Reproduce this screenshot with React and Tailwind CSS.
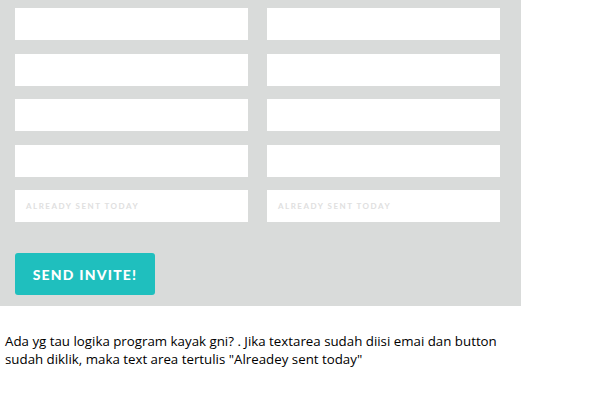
export default function App() {
  const rows = [0, 1, 2, 3];
  return (
    <div className="w-[608px] h-[404px] bg-white relative overflow-hidden">
      <div className="w-[521px] h-[306px] bg-[#d9dbda] pt-[8px] pl-[15px]">
        <div className="grid grid-cols-[233px_233px] gap-x-[19px] gap-y-[13.5px]">
          {rows.map((r) => (
            <>
              <div key={"a" + r} className="h-[32px] bg-white" />
              <div key={"b" + r} className="h-[32px] bg-white" />
            </>
          ))}
          <div className="h-[32px] bg-white flex items-center pl-[11px] text-[8px] tracking-[1.5px] text-[#e0e0e0] font-bold font-['Lato',sans-serif]">
            ALREADY SENT TODAY
          </div>
          <div className="h-[32px] bg-white flex items-center pl-[11px] text-[8px] tracking-[1.5px] text-[#e0e0e0] font-bold font-['Lato',sans-serif]">
            ALREADY SENT TODAY
          </div>
        </div>
        <button className="mt-[31px] w-[140px] h-[42px] bg-[#1fbfbe] rounded-[3px] text-white text-[14px] font-black tracking-[1.2px] flex items-center justify-center font-['Lato',sans-serif]">
          SEND INVITE!
        </button>
      </div>
      <p className="pl-[5px] pt-[26px] text-[13.3px] leading-[18px] text-black font-['Open_Sans',sans-serif] w-[520px]">
        Ada yg tau logika program kayak gni? . Jika textarea sudah diisi emai dan button
        <br />
        sudah diklik, maka text area tertulis "Alreadey sent today"
      </p>
    </div>
  );
}
